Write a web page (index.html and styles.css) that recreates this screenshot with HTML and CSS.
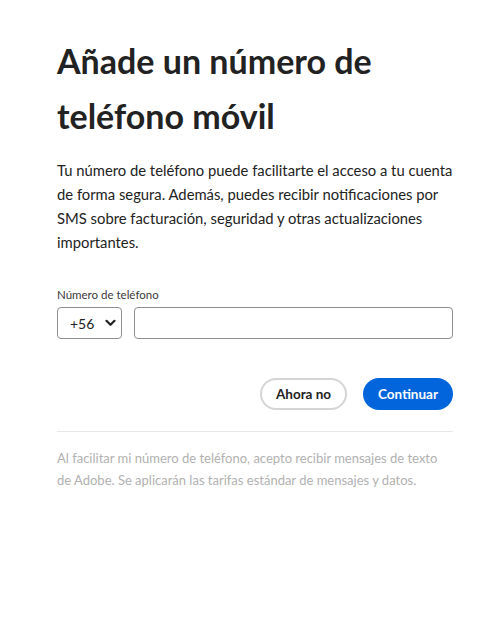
FILE: index.html
```html
<!DOCTYPE html>
<html lang="es">
<head>
<meta charset="utf-8">
<title>Añade un número de teléfono móvil</title>
<link rel="stylesheet" href="styles.css">
</head>
<body>
<main class="card">
  <h1 class="title">Añade un número de<br>teléfono móvil</h1>
  <p class="intro">Tu número de teléfono puede facilitarte el acceso a tu cuenta<br>de forma segura. Además, puedes recibir notificaciones por<br>SMS sobre facturación, seguridad y otras actualizaciones<br>importantes.</p>
  <div class="field">
    <label class="label" for="phone">Número de teléfono</label>
    <div class="phone-row">
      <div class="country">
        <span class="code">+56</span>
        <svg class="chev" width="11" height="8" viewBox="0 0 11 8"><path d="M1.5 1.8 L5.5 5.8 L9.5 1.8" fill="none" stroke="#222" stroke-width="2.2" stroke-linecap="round" stroke-linejoin="round"/></svg>
      </div>
      <input id="phone" class="phone" type="text">
    </div>
  </div>
  <div class="actions">
    <button class="btn btn-secondary">Ahora no</button>
    <button class="btn btn-primary">Continuar</button>
  </div>
  <hr class="divider">
  <p class="note">Al facilitar mi número de teléfono, acepto recibir mensajes de texto<br>de Adobe. Se aplicarán las tarifas estándar de mensajes y datos.</p>
</main>
</body>
</html>
```

FILE: styles.css
```css
html, body {
  margin: 0;
  padding: 0;
  background: #ffffff;
}
body {
  font-family: "Lato", "Noto Sans", sans-serif;
  color: #222222;
}
.card {
  width: 396px;
  padding: 33px 46px 0 57px;
}
.title {
  margin: 0;
  font-size: 34px;
  line-height: 55px;
  font-weight: 700;
  color: #222222;
}
.intro {
  margin: 15px 0 0;
  font-size: 14.8px;
  line-height: 24px;
  color: #222222;
  white-space: nowrap;
}
.field {
  margin-top: 33px;
}
.label {
  display: block;
  font-size: 11.5px;
  line-height: 16px;
  color: #3a3a3a;
  margin-bottom: 4px;
}
.phone-row {
  display: flex;
  gap: 12px;
}
.country {
  box-sizing: border-box;
  width: 65px;
  height: 32px;
  border: 1px solid #8e8e8e;
  border-radius: 4px;
  display: flex;
  align-items: center;
  justify-content: space-between;
  padding: 0 5px 0 12px;
  font-size: 14px;
  color: #222;
}
.chev {
  display: block;
}
.phone {
  box-sizing: border-box;
  flex: 1;
  height: 32px;
  border: 1px solid #8e8e8e;
  border-radius: 4px;
  margin: 0;
  padding: 0 10px;
  font: inherit;
}
.actions {
  display: flex;
  justify-content: flex-end;
  gap: 16px;
  margin-top: 39px;
}
.btn {
  box-sizing: border-box;
  height: 32px;
  border-radius: 16px;
  font-family: inherit;
  font-size: 13.5px;
  font-weight: 700;
  padding: 0;
  margin: 0;
  white-space: nowrap;
  cursor: pointer;
}
.btn-secondary {
  width: 87px;
  background: #ffffff;
  border: 2px solid #d5d5d5;
  color: #222222;
}
.btn-primary {
  width: 90px;
  background: #0265dc;
  border: none;
  color: #ffffff;
}
.divider {
  margin: 21px 0 0;
  border: none;
  border-top: 1px solid #e8e8e8;
}
.note {
  margin: 15px 0 0;
  font-size: 13px;
  line-height: 22px;
  color: #b1b1b1;
  white-space: nowrap;
}
```
